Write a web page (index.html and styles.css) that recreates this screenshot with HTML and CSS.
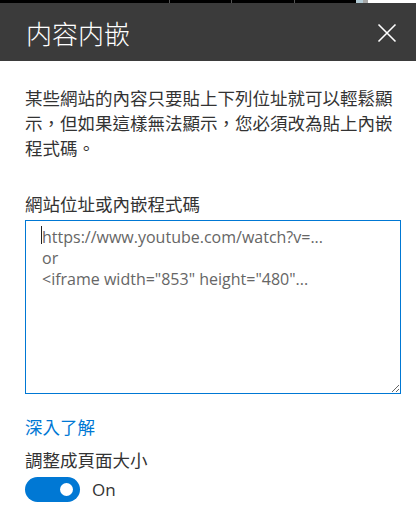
FILE: index.html
```html
<!DOCTYPE html>
<html lang="zh-Hant">
<head>
<meta charset="utf-8">
<link rel="stylesheet" href="styles.css">
</head>
<body>
<div class="topstrip">
  <div class="seg s1"></div>
  <div class="seg s2"></div>
  <div class="seg s3"></div>
  <div class="seg s4"></div>
  <div class="seg s5"></div>
  <div class="seg s6"></div>
  <div class="seg s7"></div>
</div>
<header class="panel-header">
  <h1 class="title">内容内嵌</h1>
  <button class="close" aria-label="關閉">
    <svg width="20" height="20" viewBox="0 0 20 20"><path d="M1.5 1.5 L18.5 18.5 M18.5 1.5 L1.5 18.5" stroke="#fff" stroke-width="1.6" fill="none"/></svg>
  </button>
</header>
<main class="panel-body">
  <p class="desc">某些網站的內容只要貼上下列位址就可以輕鬆顯示，但如果這樣無法顯示，您必須改為貼上內嵌程式碼。</p>
  <label class="field-label" for="embed">網站位址或內嵌程式碼</label>
  <div class="input-wrap">
    <textarea id="embed" class="embed-input" placeholder="https://www.youtube.com/watch?v=...&#10;or&#10;&lt;iframe width=&quot;853&quot; height=&quot;480&quot;..."></textarea>
    <span class="caret"></span>
  </div>
  <a class="learn" href="#">深入了解</a>
  <div class="toggle-label">調整成頁面大小</div>
  <div class="toggle-row">
    <span class="toggle"><span class="knob"></span></span>
    <span class="toggle-text">On</span>
  </div>
</main>
</body>
</html>
```

FILE: styles.css
```css
html, body {
  margin: 0;
  padding: 0;
  background: #fff;
}
body {
  width: 416px;
  height: 512px;
  overflow: hidden;
  font-family: "Open Sans", "Noto Sans CJK TC", sans-serif;
  color: #333;
}
.topstrip {
  display: flex;
  height: 3px;
}
.seg { height: 3px; }
.s1 { width: 169px; background: #000; border-right: 1px solid #555; }
.s2 { width: 61px; background: #000; border-right: 1px solid #555; }
.s3 { width: 62px; background: #000; border-right: 1px solid #555; }
.s4 { width: 61px; background: #000; }
.s5 { width: 7px; background: #b3ccd6; }
.s6 { width: 5px; background: #a6a6a6; }
.s7 { flex: 1; background: #fff; }

.panel-header {
  height: 58px;
  background: #3b3b3b;
  display: flex;
  align-items: center;
  justify-content: space-between;
  padding: 0 19px 0 26px;
}
.title {
  margin: 0;
  font-family: "Noto Sans CJK TC", sans-serif;
  font-weight: 300;
  font-size: 26px;
  line-height: 30px;
  color: #fff;
  padding-top: 2px;
}
.close {
  background: none;
  border: 0;
  padding: 0;
  width: 20px;
  height: 20px;
  display: flex;
  margin-top: 1px;
}

.panel-body {
  padding: 24px 16px 0 25px;
  display: flex;
  flex-direction: column;
  align-items: flex-start;
}
.desc {
  margin: 0;
  font-family: "Noto Sans CJK TC", sans-serif;
  font-size: 17.5px;
  line-height: 25px;
  color: #333;
}
.field-label {
  margin-top: 31px;
  font-family: "Noto Sans CJK TC", sans-serif;
  font-size: 17.5px;
  line-height: 25px;
  color: #333;
}
.input-wrap {
  position: relative;
  margin-top: 4px;
  display: flex;
}
.embed-input {
  box-sizing: border-box;
  width: 376px;
  height: 174px;
  margin: 0;
  border: 1px solid #0078d4;
  border-radius: 0;
  outline: none;
  padding: 6px 16px;
  font-family: "Open Sans", sans-serif;
  font-size: 16px;
  line-height: 21px;
  color: #333;
  resize: both;
}
.embed-input::placeholder {
  color: #666;
}
.caret {
  position: absolute;
  left: 16px;
  top: 6px;
  width: 1px;
  height: 18px;
  background: #222;
}
.learn {
  margin-top: 20px;
  font-family: "Noto Sans CJK TC", sans-serif;
  font-size: 17.5px;
  line-height: 25px;
  color: #0078d4;
  text-decoration: none;
}
.toggle-label {
  margin-top: 8px;
  font-family: "Noto Sans CJK TC", sans-serif;
  font-size: 17.5px;
  line-height: 25px;
  color: #333;
}
.toggle-row {
  margin-top: 5px;
  display: flex;
  align-items: center;
  gap: 12px;
}
.toggle {
  width: 55px;
  height: 25px;
  border-radius: 13px;
  background: #0078d4;
  display: flex;
  align-items: center;
  justify-content: flex-end;
  padding-right: 7px;
  box-sizing: border-box;
}
.knob {
  width: 13px;
  height: 13px;
  border-radius: 50%;
  background: #fff;
}
.toggle-text {
  font-family: "Open Sans", sans-serif;
  font-size: 17px;
  color: #333;
}
```
